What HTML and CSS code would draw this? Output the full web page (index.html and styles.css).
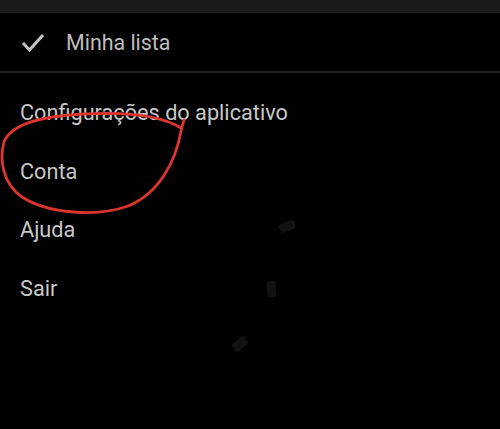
FILE: index.html
```html
<!DOCTYPE html>
<html lang="pt-BR">
<head>
    <meta charset="UTF-8">
    <meta name="viewport" content="width=device-width, initial-scale=1.0">
    <title>Menu</title>
    <link rel="stylesheet" href="styles.css">
</head>
<body>
    <div class="top-bar"></div>

    <div class="my-list">
        <svg class="check" width="24" height="20" viewBox="0 0 24 20">
            <polyline points="2,10 8.5,17 22,2" fill="none" stroke="#c4c4c4" stroke-width="3"/>
        </svg>
        <span>Minha lista</span>
    </div>

    <ul class="menu">
        <li>Configurações do aplicativo</li>
        <li>Conta</li>
        <li>Ajuda</li>
        <li>Sair</li>
    </ul>

    <!-- rabisco vermelho e spinner por cima -->
    <svg class="overlay" width="500" height="429" viewBox="0 0 500 429">
        <rect x="279" y="222" width="16" height="9" rx="2" fill="#121212" transform="rotate(-22 287 226)"/>
        <rect x="267" y="281" width="9" height="16" rx="2" fill="#121212" transform="rotate(-6 271 289)"/>
        <rect x="232" y="339" width="16" height="10" rx="2" fill="#111111" transform="rotate(-38 240 344)"/>
        <path d="M184,120 L181,131 C176,160 160,193 128,206 C98,217 48,214 22,197 C3,184 -1,160 4,142 C11,124 40,116 85,114 C125,112 160,115 181,128"
              fill="none" stroke="#dc352d" stroke-width="2.8" stroke-linecap="round" stroke-linejoin="round"/>
    </svg>
</body>
</html>
```

FILE: styles.css
```css
body {
    background-color: #000000;
    color: #c8c8c8;
    font-family: Roboto, "Liberation Sans", sans-serif;
    margin: 0;
    width: 500px;
    height: 429px;
    overflow: hidden;
    position: relative;
}
.top-bar {
    height: 13px;
    background-color: #1b1b1b;
}
.my-list {
    height: 58px;
    display: flex;
    align-items: center;
    padding-left: 21px;
    border-bottom: 2px solid #242424;
    font-size: 21.4px;
    color: #bdbdbd;
}
.check {
    margin-right: 21px;
    margin-top: 1px;
}
.menu {
    list-style: none;
    margin: 0;
    padding: 25px 0 0 20px;
}
.menu li {
    font-size: 21.7px;
    height: 58.7px;
    line-height: 30px;
}
.overlay {
    position: absolute;
    left: 0;
    top: 0;
    pointer-events: none;
}
```
